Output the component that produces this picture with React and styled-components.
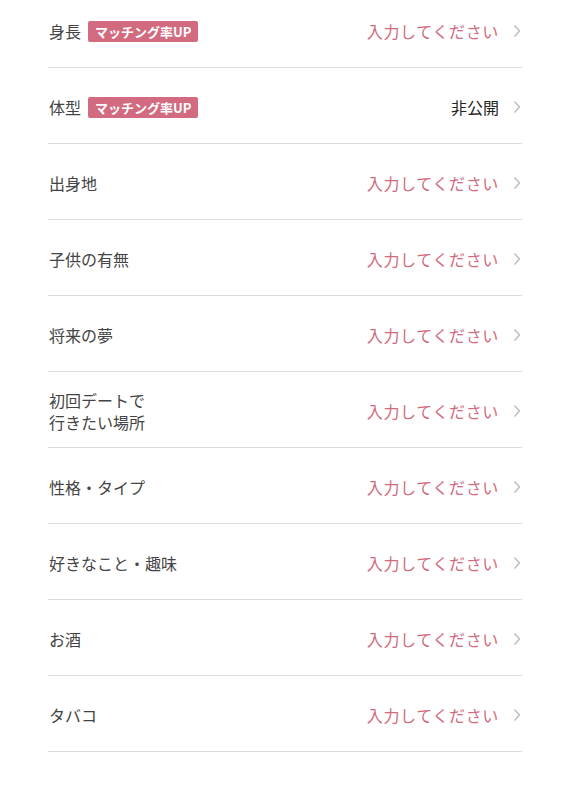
import React from 'react';
import styled, { createGlobalStyle } from 'styled-components';

const rows = [
    { label: '身長', badge: true },
    { label: '体型', badge: true, value: '非公開' },
    { label: '出身地' },
    { label: '子供の有無' },
    { label: '将来の夢' },
    { label: ['初回デートで', '行きたい場所'] },
    { label: '性格・タイプ' },
    { label: '好きなこと・趣味' },
    { label: 'お酒' },
    { label: 'タバコ' },
];

function App() {
    return (
        <>
            <GlobalStyle />
            <Page>
                <List>
                    {rows.map((row, i) => (
                        <Row key={i}>
                            <Label>
                                {Array.isArray(row.label)
                                    ? row.label.map((line) => <div key={line}>{line}</div>)
                                    : row.label}
                                {row.badge && <Badge>マッチング率UP</Badge>}
                            </Label>
                            <Right>
                                <Value filled={!!row.value}>{row.value || '入力してください'}</Value>
                                <Chevron viewBox="0 0 8 14">
                                    <path d="M1.5 1.5 L6.5 7 L1.5 12.5" />
                                </Chevron>
                            </Right>
                        </Row>
                    ))}
                </List>
            </Page>
        </>
    );
}

const GlobalStyle = createGlobalStyle`
    body {
        margin: 0;
        background: #fff;
        font-family: "Noto Sans CJK JP", "Noto Sans", sans-serif;
    }
`

const Page = styled.div`
    width: 581px;
    height: 787px;
    overflow: hidden;
    padding: 0 59px 0 48px;
    box-sizing: border-box;
`

const List = styled.div`
    margin-top: -8px;
`

const Row = styled.div`
    height: 76px;
    box-sizing: border-box;
    display: flex;
    align-items: center;
    justify-content: space-between;
    padding-top: 3px;
    border-bottom: 1px solid #dcdcdc;
`

const Label = styled.div`
    display: flex;
    align-items: center;
    flex-wrap: wrap;
    gap: 7px;
    font-size: 16px;
    line-height: 22px;
    color: #444;
    padding-left: 1px;

    & > div {
        width: 100%;
    }
    & > div + div {
        margin-top: -7px;
    }
`

const Badge = styled.span`
    display: inline-flex;
    align-items: center;
    height: 21px;
    padding: 0 7px;
    border-radius: 2px;
    background: #d26a80;
    color: #fff;
    font-size: 13px;
    font-weight: 700;
    line-height: 1;
`

const Right = styled.div`
    display: flex;
    align-items: center;
    gap: 14px;
    padding-right: 1px;
`

const Value = styled.span`
    font-size: 16px;
    letter-spacing: ${(p) => (p.filled ? '0' : '0.65px')};
    color: ${(p) => (p.filled ? '#222' : '#d06a7c')};
`

const Chevron = styled.svg`
    width: 8px;
    height: 14px;
    fill: none;
    stroke: #bdbdbd;
    stroke-width: 1.4;
`

export default App;
